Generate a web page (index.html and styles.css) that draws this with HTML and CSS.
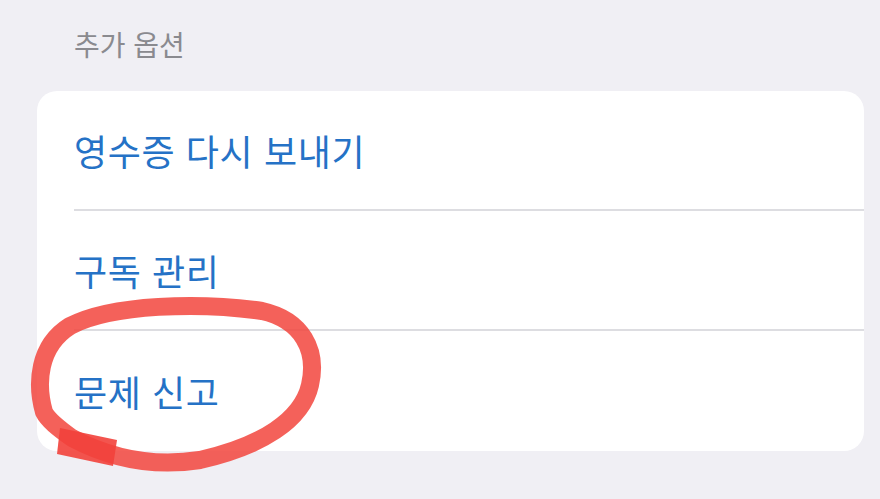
FILE: index.html
```html
<!DOCTYPE html>
<html lang="ko">
<head>
  <meta charset="UTF-8" />
  <title>추가 옵션</title>
  <link rel="stylesheet" href="styles.css">
</head>

<body>
  <div class="section-title">추가 옵션</div>

  <div class="card">
    <div class="row"><span class="label">영수증 다시 보내기</span></div>
    <div class="row"><span class="label">구독 관리</span></div>
    <div class="row"><span class="label">문제 신고</span></div>
  </div>

  <!-- hand-drawn marker over the last row -->
  <svg class="scribble" width="880" height="499" viewBox="0 0 880 499">
    <path class="loop" d="M44 412 C36 384 38 346 70 326 C112 304 200 302 262 311 C302 320 318 350 310 385 C302 420 262 446 200 460 C150 468 106 456 72 438 C58 428 48 420 44 412 Z" />
    <polygon class="tail" points="60,428 117,440 113,466 57,454" />
  </svg>
</body>
</html>
```

FILE: styles.css
```css
body {
  margin: 0;
  background: #f0eff4;
  font-family: "Noto Sans CJK KR", "Noto Sans", sans-serif;
  width: 880px;
  height: 499px;
  overflow: hidden;
  position: relative;
}

.section-title {
  height: 91px;
  box-sizing: border-box;
  padding: 26px 0 0 74px;
  font-size: 28px;
  line-height: 36px;
  color: #8a8a8f;
}

.card {
  margin: 0 16px 0 37px;
  background: #fff;
  border-radius: 20px;
  overflow: hidden;
}

.row {
  margin-left: 37px;
  height: 120px;
  box-sizing: border-box;
  border-bottom: 2px solid #dddde1;
  display: flex;
  align-items: center;
}

.row:last-child {
  border-bottom: none;
}

.label {
  font-size: 36px;
  letter-spacing: 0.6px;
  color: #2572c6;
}

.scribble {
  position: absolute;
  left: 0;
  top: 0;
  pointer-events: none;
}

.loop {
  fill: none;
  stroke: #f2473f;
  stroke-width: 18;
  stroke-linejoin: round;
  opacity: 0.86;
}

.tail {
  fill: #f2413b;
  opacity: 0.9;
}
```
